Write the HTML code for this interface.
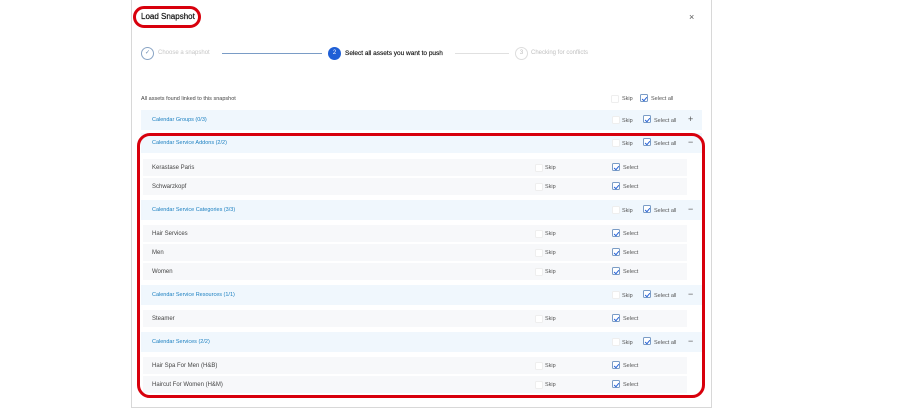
<!DOCTYPE html><html><head><style>
*{margin:0;padding:0;box-sizing:border-box}
body{width:900px;height:400px;background:#fff;position:relative;overflow:hidden;font-family:"Liberation Sans",sans-serif;color:#333}
.a{position:absolute}
.modal{left:131px;top:-2px;width:581px;height:410px;border:1px solid #d8d8d8;background:#fff}
.t{font-size:6px;white-space:nowrap}
.hdr{left:141px;width:561px;height:20px;background:#f0f7fd}
.hdr .n{position:absolute;left:11px;top:7px;font-size:5.5px;color:#1a7fc0}
.row{left:143px;width:544px;height:17px;background:#f7f8fa}
.row .n{position:absolute;left:9px;top:5.5px;font-size:6px;color:#444}
.cb{position:absolute;width:8px;height:8px;border:1px solid #7a9cc6;border-radius:1.5px;background:#fff}
.cb.e{border-color:#eee}
.cb.c::after{content:"";position:absolute;left:2px;top:0.5px;width:2px;height:4px;border:solid #2864d8;border-width:0 1px 1px 0;transform:rotate(40deg)}
.l{position:absolute;font-size:5.5px;color:#555}
.pm{position:absolute;font-size:9px;color:#555}
</style></head><body>
<div class="a modal"></div>
<div class="a" style="left:133px;top:6px;width:68px;height:22px;border:3px solid #d8000c;border-radius:11px"></div>
<div class="a t" style="left:141px;top:12px;font-size:8px;color:#111;-webkit-text-stroke:0.2px #111">Load Snapshot</div>
<div class="a" style="left:689px;top:12px;font-size:9px;color:#555">×</div>
<div class="a" style="left:141px;top:47px;width:13px;height:13px;border:1px solid #8aa5c5;border-radius:50%;font-size:6px;color:#6a8ab0;text-align:center;line-height:11px">✓</div>
<div class="a t" style="left:158px;top:50px;color:#c6c6c6">Choose a snapshot</div>
<div class="a" style="left:222px;top:53px;width:100px;height:1px;background:#7a9cc6"></div>
<div class="a" style="left:328px;top:47px;width:13px;height:13px;background:#1f5fd6;border-radius:50%;font-size:6px;color:#fff;text-align:center;line-height:13px">2</div>
<div class="a t" style="left:345px;top:50px;font-size:6.5px;color:#111;-webkit-text-stroke:0.15px #111">Select all assets you want to push</div>
<div class="a" style="left:455px;top:53px;width:54px;height:1px;background:#e0e0e0"></div>
<div class="a" style="left:515px;top:47px;width:13px;height:13px;border:1px solid #ddd;border-radius:50%;font-size:6px;color:#bbb;text-align:center;line-height:11px">3</div>
<div class="a t" style="left:531px;top:50px;color:#c0c0c0">Checking for conflicts</div>
<div class="a t" style="left:141px;top:96px;font-size:5.5px;color:#444">All assets found linked to this snapshot</div>
<div class="cb e a" style="left:611px;top:95px"></div><div class="l" style="left:622px;top:96px">Skip</div>
<div class="cb c a" style="left:640px;top:94px"></div><div class="l" style="left:651px;top:96px">Select all</div>
<div id="c"></div>
<div class="a" style="left:137px;top:133px;width:568px;height:265px;border:3px solid #d8000c;border-radius:13px"></div>
<script>
var H='',rows=[['h',110,'Calendar Groups (0/3)','+'],['h',133,'Calendar Service Addons (2/2)','−'],['r',159,'Kerastase Paris'],['r',178,'Schwarzkopf'],['h',200,'Calendar Service Categories (3/3)','−'],['r',225,'Hair Services'],['r',244,'Men'],['r',263,'Women'],['h',285,'Calendar Service Resources (1/1)','−'],['r',310,'Steamer'],['h',332,'Calendar Services (2/2)','−'],['r',357,'Hair Spa For Men (H&amp;B)'],['r',376,'Haircut For Women (H&amp;M)']];
rows.forEach(function(r){var y=r[1];if(r[0]=='h'){H+='<div class="a hdr" style="top:'+y+'px"><span class="n">'+r[2]+'</span></div>'+
'<div class="cb e" style="left:612px;top:'+(y+6)+'px"></div><div class="l" style="left:622px;top:'+(y+8)+'px">Skip</div>'+
'<div class="cb c" style="left:643px;top:'+(y+5)+'px"></div><div class="l" style="left:654px;top:'+(y+8)+'px">Select all</div>'+
'<div class="pm" style="left:688px;top:'+(y+4)+'px">'+r[3]+'</div>';}else{H+='<div class="a row" style="top:'+y+'px"><span class="n">'+r[2]+'</span></div>'+
'<div class="cb e" style="left:535px;top:'+(y+5)+'px"></div><div class="l" style="left:545px;top:'+(y+6)+'px">Skip</div>'+
'<div class="cb c" style="left:612px;top:'+(y+4)+'px"></div><div class="l" style="left:623px;top:'+(y+6)+'px">Select</div>';}});
document.getElementById('c').innerHTML=H;
</script>
</body></html>
